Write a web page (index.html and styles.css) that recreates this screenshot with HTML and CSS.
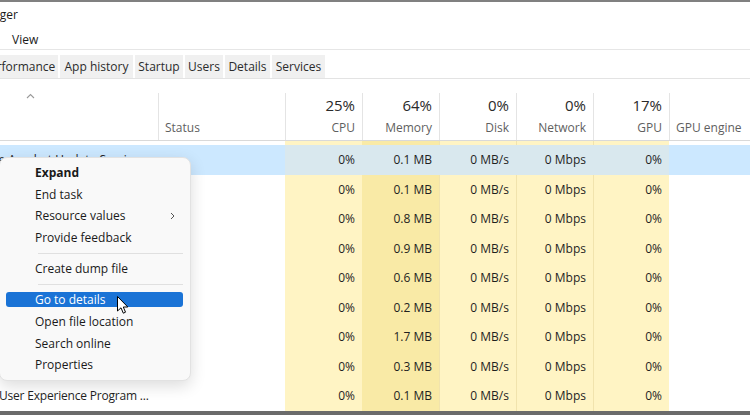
FILE: index.html
```html
<!DOCTYPE html>
<html>
<head>
<meta charset="utf-8">
<title>Task Manager</title>
<link rel="stylesheet" href="styles.css">
</head>
<body>
<div class="window">
  <div class="titlebar"><span class="title">Task Manager</span></div>
  <div class="menubar">
    <span class="mi w-file">File</span><span class="mi w-opt">Options</span><span class="mi">View</span>
  </div>
  <div class="tabs">
    <span class="tab w-proc">Processes</span>
    <span class="tab w-perf">Performance</span>
    <span class="tab w-app">App history</span>
    <span class="tab w-start">Startup</span>
    <span class="tab w-users">Users</span>
    <span class="tab w-det">Details</span>
    <span class="tab w-svc">Services</span>
  </div>
  <div class="thead">
    <div class="th"><svg class="caret" width="9" height="6" viewBox="0 0 9 6"><path d="M1 5 L4.5 1.5 L8 5" fill="none" stroke="#9a9a9a" stroke-width="1.1"/></svg></div>
    <div class="th"><div class="hc left"><span class="pct"></span><span class="lbl">Status</span></div></div>
    <div class="th"><div class="hc"><span class="pct">25%</span><span class="lbl">CPU</span></div></div>
    <div class="th"><div class="hc"><span class="pct">64%</span><span class="lbl">Memory</span></div></div>
    <div class="th"><div class="hc"><span class="pct">0%</span><span class="lbl">Disk</span></div></div>
    <div class="th"><div class="hc"><span class="pct">0%</span><span class="lbl">Network</span></div></div>
    <div class="th"><div class="hc"><span class="pct">17%</span><span class="lbl">GPU</span></div></div>
    <div class="th"><div class="hc left"><span class="pct"></span><span class="lbl">GPU engine</span></div></div>
  </div>
  <div class="tbody">
    <div class="row sel">
      <div class="name"><span class="nm n1">Adobe Acrobat Update Service</span></div><div></div>
      <div class="v h">0%</div><div class="v h">0.1 MB</div><div class="v h">0 MB/s</div><div class="v h">0 Mbps</div><div class="v h">0%</div><div></div>
    </div>
    <div class="row"><div class="name"></div><div></div><div class="v">0%</div><div class="v">0.1 MB</div><div class="v">0 MB/s</div><div class="v">0 Mbps</div><div class="v">0%</div><div></div></div>
    <div class="row"><div class="name"></div><div></div><div class="v">0%</div><div class="v">0.8 MB</div><div class="v">0 MB/s</div><div class="v">0 Mbps</div><div class="v">0%</div><div></div></div>
    <div class="row"><div class="name"></div><div></div><div class="v">0%</div><div class="v">0.9 MB</div><div class="v">0 MB/s</div><div class="v">0 Mbps</div><div class="v">0%</div><div></div></div>
    <div class="row"><div class="name"></div><div></div><div class="v">0%</div><div class="v">0.6 MB</div><div class="v">0 MB/s</div><div class="v">0 Mbps</div><div class="v">0%</div><div></div></div>
    <div class="row"><div class="name"></div><div></div><div class="v">0%</div><div class="v">0.2 MB</div><div class="v">0 MB/s</div><div class="v">0 Mbps</div><div class="v">0%</div><div></div></div>
    <div class="row"><div class="name"></div><div></div><div class="v">0%</div><div class="v">1.7 MB</div><div class="v">0 MB/s</div><div class="v">0 Mbps</div><div class="v">0%</div><div></div></div>
    <div class="row"><div class="name"></div><div></div><div class="v">0%</div><div class="v">0.3 MB</div><div class="v">0 MB/s</div><div class="v">0 Mbps</div><div class="v">0%</div><div></div></div>
    <div class="row"><div class="name"><span class="nm n9">User Experience Program ...</span></div><div></div><div class="v">0%</div><div class="v">0.1 MB</div><div class="v">0 MB/s</div><div class="v">0 Mbps</div><div class="v">0%</div><div></div></div>
  </div>

  <div class="ctx">
    <div class="item bold">Expand</div>
    <div class="item">End task</div>
    <div class="item sub">Resource values<svg class="chev" width="5" height="8" viewBox="0 0 5 8"><path d="M1 1 L4 4 L1 7" fill="none" stroke="#555" stroke-width="1"/></svg></div>
    <div class="item">Provide feedback</div>
    <div class="sep"></div>
    <div class="item">Create dump file</div>
    <div class="sep"></div>
    <div class="item hl">Go to details</div>
    <div class="item">Open file location</div>
    <div class="item">Search online</div>
    <div class="item">Properties</div>
  </div>

  <svg class="cursor" width="12" height="19" viewBox="0 0 12 19"><path d="M0.5 0.5 L0.5 15 L4 11.8 L6.3 17.2 L8.5 16.2 L6.3 11 L10.8 11 Z" fill="#fff" stroke="#000" stroke-width="1" stroke-linejoin="round"/></svg>
</div>
</body>
</html>
```

FILE: styles.css
```css
* { box-sizing: border-box; margin: 0; padding: 0; }
html, body { width: 750px; height: 415px; overflow: hidden; background: #fff; }
body {
  font-family: "Open Sans", "Noto Sans", "Liberation Sans", sans-serif;
  font-size: 12px;
  color: #1f1f1f;
}
.window {
  position: relative;
  width: 750px;
  height: 415px;
  border-top: 2px solid #808080;
  border-bottom: 4px solid #6b6b6b;
  display: flex;
  flex-direction: column;
  overflow: hidden;
}
.titlebar { height: 24px; display: flex; align-items: center; overflow: hidden; flex: none; }
.title { flex: none; width: 80px; margin-left: -62px; text-align: right; color: #1a1a1a; white-space: nowrap; }

.menubar {
  flex: none;
  height: 24px;
  padding-top: 5px;
  display: flex;
  border-bottom: 1px solid #e6e6e6;
  overflow: hidden;
}
.mi { flex: none; line-height: 18px; color: #1a1a1a; }
.w-file { width: 36px; margin-left: -90px; }
.w-opt { width: 66px; }

.tabs {
  flex: none;
  margin-top: 5px;
  height: 24px;
  display: flex;
  gap: 2px;
  border-bottom: 1px solid #e3e3e3;
  overflow: hidden;
}
.tab {
  flex: none;
  height: 23px;
  line-height: 23px;
  background: #f0f0f0;
  color: #2b2b2b;
  text-align: center;
  white-space: nowrap;
  overflow: hidden;
}
.w-proc { width: 66px; margin-left: -91px; }
.w-perf { width: 81px; padding-left: 3px; }
.w-app { width: 73px; }
.w-start { width: 48px; }
.w-users { width: 38px; }
.w-det { width: 45px; }
.w-svc { width: 53px; }

.thead, .row {
  display: grid;
  grid-template-columns: 158px 127px 77px 77px 77px 77px 76px 1fr;
}
.thead { flex: none; height: 62px; border-bottom: 1px solid #d9d9d9; }
.th { position: relative; }
.caret { position: absolute; left: 26px; top: 14px; }
.hc {
  margin-top: 14px;
  height: 47px;
  border-left: 1px solid #e4e4e4;
  display: flex;
  flex-direction: column;
  align-items: flex-end;
  padding-right: 7px;
}
.hc.left { align-items: flex-start; padding-left: 6px; padding-right: 0; }
.pct { height: 24px; line-height: 24px; font-size: 15px; color: #2a2a2a; }
.lbl { height: 22px; line-height: 22px; color: #5f5f5f; }

.tbody {
  flex: 1;
  padding-top: 4px;
  background:
    linear-gradient(to right,
      #fff 0 285px,
      #fff4c4 285px 362px,
      #f9eaa6 362px 439px,
      #f1e3ad 439px 440px,
      #fff4c4 440px 516px,
      #f1e3ad 516px 517px,
      #fff4c4 517px 593px,
      #f1e3ad 593px 594px,
      #fff4c4 594px 669px,
      #fff 669px);
}
.row { height: 29.5px; align-items: center; }
.row > div { height: 100%; display: flex; align-items: center; }
.row.sel { background: #cce8ff; }
.row.sel .h { background: #d9e8ee; }
.name { overflow: hidden; white-space: nowrap; }
.nm { flex: none; color: #1f1f1f; }
.n1 { margin-left: -31px; }
.n9 { margin-left: -1px; letter-spacing: -0.2px; }
.v { justify-content: flex-end; padding-right: 7px; color: #1f1f1f; }

.ctx {
  position: absolute;
  left: -1px;
  top: 155px;
  width: 192px;
  height: 224px;
  padding: 4px 7px 0 6px;
  display: flex;
  flex-direction: column;
  background: #f9f9f9;
  border: 1px solid #e2e2e2;
  border-radius: 8px;
  box-shadow: 0 5px 16px rgba(0, 0, 0, 0.14);
}
.item {
  flex: none;
  height: 21.5px;
  display: flex;
  align-items: center;
  justify-content: space-between;
  padding-left: 29px;
  padding-right: 8px;
  color: #1a1a1a;
  white-space: nowrap;
}
.item.bold { font-weight: 700; }
.item.hl {
  height: 15px;
  margin: 2.5px 0 4px;
  background: #1a73d6;
  color: #fff;
  border-radius: 3px;
}
.sep { flex: none; height: 1px; margin: 4.5px 0 4.5px 32px; background: #e0e0e0; }
.cursor { position: absolute; left: 117px; top: 294px; }
```
